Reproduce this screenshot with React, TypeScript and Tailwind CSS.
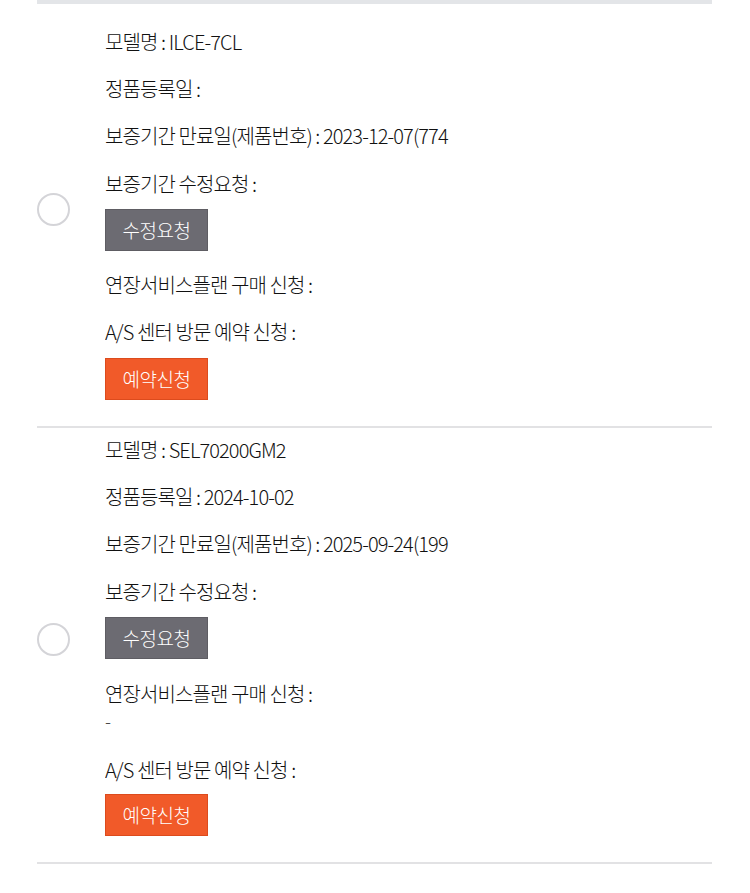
import React from 'react';

type Item = {
  model: string;
  registered: string;
  expiry: string;
  planDash?: boolean;
  top: string;
};

const items: Item[] = [
  { model: 'ILCE-7CL', registered: '', expiry: '2023-12-07(774', top: 'pt-[24px]' },
  { model: 'SEL70200GM2', registered: '2024-10-02', expiry: '2025-09-24(199', planDash: true, top: 'pt-[8px]' },
];

function Line({ children, className = '' }: { children: React.ReactNode; className?: string }) {
  return (
    <p className={`relative h-[28px] w-[362px] overflow-hidden whitespace-nowrap text-[20px] leading-[28px] tracking-[-0.9px] text-[#111] ${className}`}>
      {children}
      <span className="pointer-events-none absolute right-0 top-0 h-full w-[12px] bg-gradient-to-r from-transparent to-white" />
    </p>
  );
}

function Btn({ label, tone, className = '' }: { label: string; tone: 'gray' | 'orange'; className?: string }) {
  const color = tone === 'gray' ? 'bg-[#6c6b72] border-[#5e5d63]' : 'bg-[#f15a29] border-[#dc4b1d]';
  return (
    <button className={`flex h-[42px] w-[103px] items-center justify-center border text-[19px] tracking-[-0.5px] text-white ${color} ${className}`}>
      {label}
    </button>
  );
}

function Row({ item }: { item: Item }) {
  return (
    <div className="flex items-center border-b-2 border-[#e2e2e4]">
      <div className="w-[68px] shrink-0 pb-[12px]">
        <div className="h-[33px] w-[33px] rounded-full border-2 border-[#d4d4d8] bg-white" />
      </div>
      <div className={`flex flex-col ${item.top} pb-[26px]`}>
        <Line>모델명 : {item.model}</Line>
        <Line className="mt-[19px]">정품등록일 : {item.registered}</Line>
        <Line className="mt-[19px]">보증기간 만료일(제품번호) : {item.expiry}</Line>
        <Line className="mt-[20px]">보증기간 수정요청 :</Line>
        <Btn label="수정요청" tone="gray" className="mt-[11px]" />
        <Line className={item.planDash ? 'mt-[21px]' : 'mt-[20px]'}>연장서비스플랜 구매 신청 :</Line>
        {item.planDash ? (
          <>
            <p className="h-[24px] text-[18px] leading-[24px] text-[#444]">-</p>
            <Line className="mt-[24px]">A/S 센터 방문 예약 신청 :</Line>
            <Btn label="예약신청" tone="orange" className="mt-[10px]" />
          </>
        ) : (
          <>
            <Line className="mt-[19px]">A/S 센터 방문 예약 신청 :</Line>
            <Btn label="예약신청" tone="orange" className="mt-[12px]" />
          </>
        )}
      </div>
    </div>
  );
}

export default function App() {
  return (
    <div className="min-h-[893px] w-[750px] bg-white font-['Noto_Sans_CJK_KR','Noto_Sans',sans-serif] font-light">
      <div className="mx-[37px] w-[675px] border-t-4 border-[#e3e5e8]">
        {items.map((item) => (
          <Row key={item.model} item={item} />
        ))}
      </div>
    </div>
  );
}
